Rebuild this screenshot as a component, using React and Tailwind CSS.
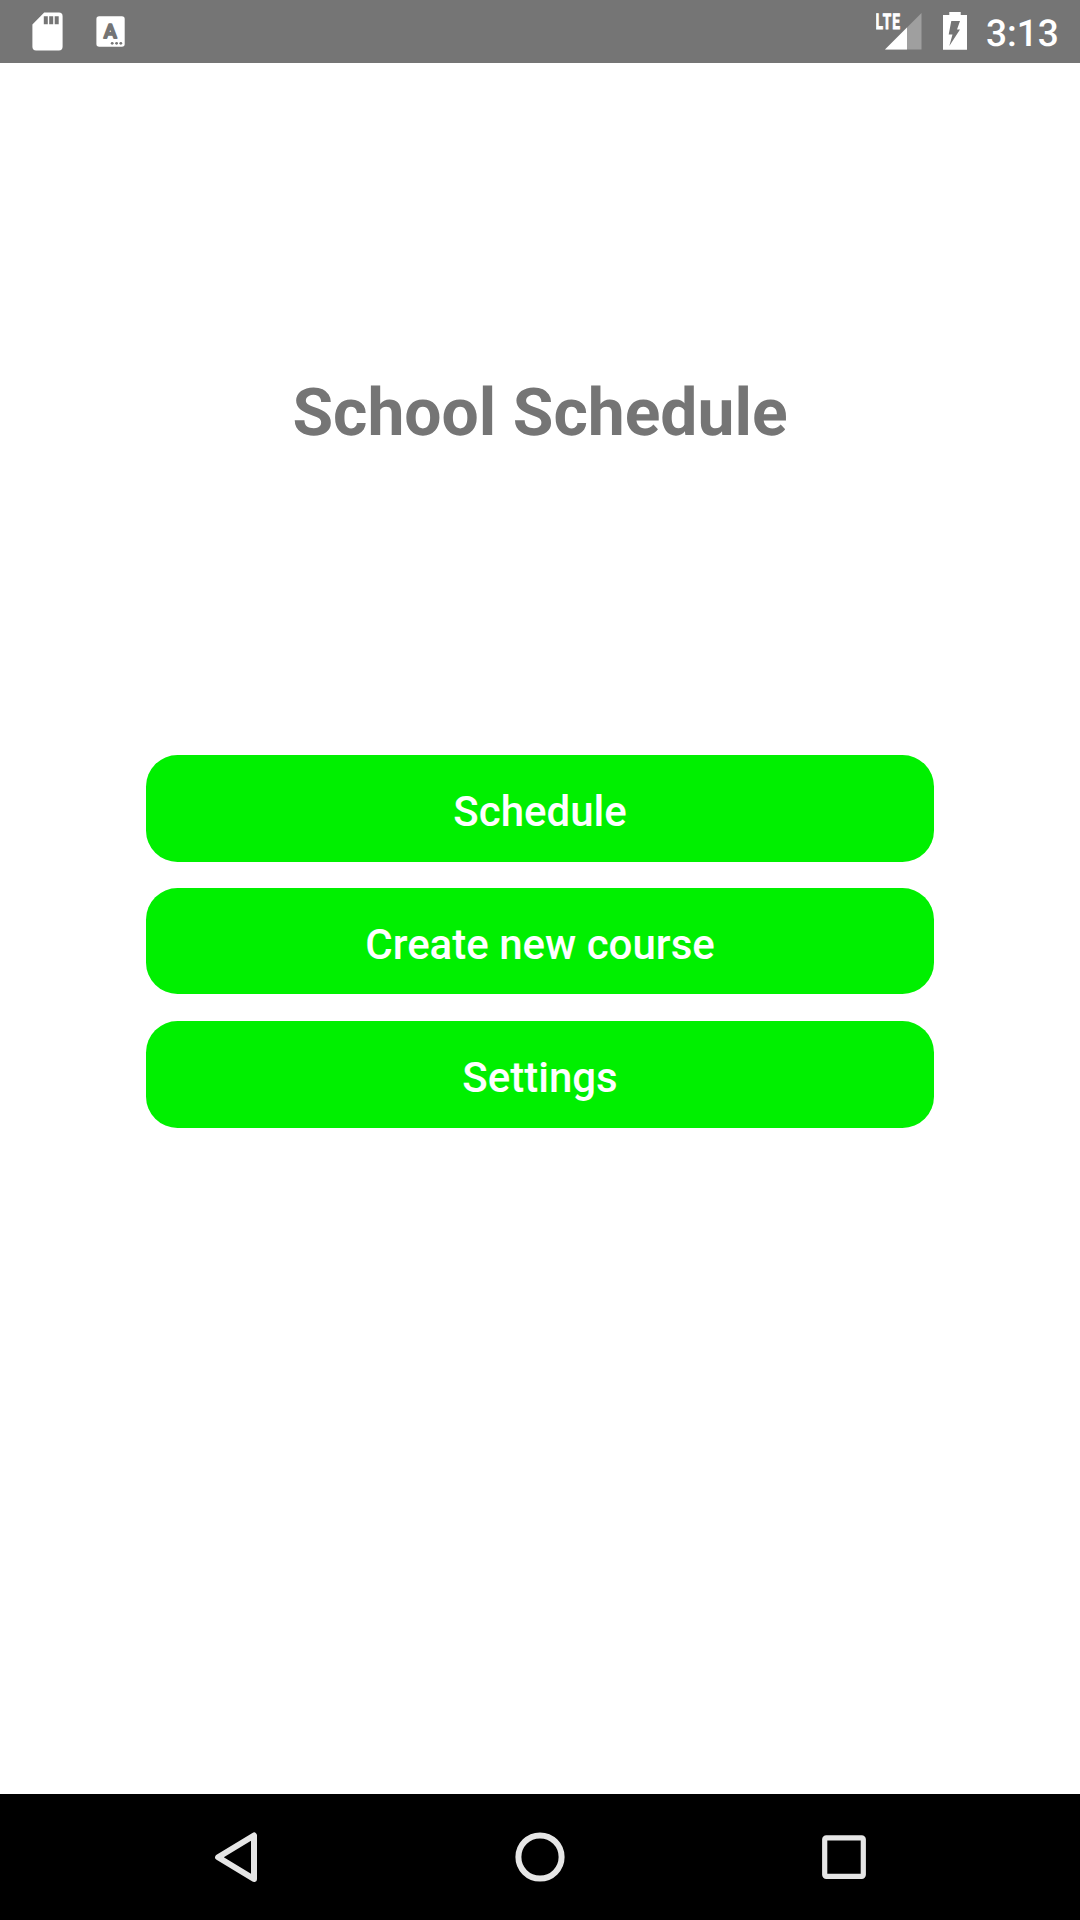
import React from "react";

function SdCardIcon() {
  return (
    <svg width="32" height="40" viewBox="0 0 32 40" className="shrink-0">
      <path
        fill="#fff"
        fillRule="evenodd"
        d="M12.2 1.6H26.9a3.7 3.7 0 0 1 3.7 3.7V35.8a3.7 3.7 0 0 1-3.7 3.7H4.1a3.7 3.7 0 0 1-3.7-3.7V13.4ZM11.8 5.3v8h4v-8ZM17.2 5.3v8h4v-8ZM22.7 5.3v8h4v-8Z"
      />
    </svg>
  );
}

function LetterBoxIcon() {
  return (
    <svg width="29" height="31" viewBox="0 0 29 31" className="shrink-0">
      <rect x="0.4" y="0.2" width="28.3" height="30.6" rx="2.8" fill="#fff" />
      <text
        x="14.3"
        y="22"
        textAnchor="middle"
        fontFamily="Roboto, sans-serif"
        fontWeight="500"
        fontSize="19.6"
        fill="#757575"
        stroke="#757575"
        strokeWidth="1.8"
        strokeLinejoin="round"
      >
        A
      </text>
      <circle cx="16.2" cy="27.3" r="1.4" fill="#757575" />
      <circle cx="20.6" cy="27.3" r="1.4" fill="#757575" />
      <circle cx="24.8" cy="27.3" r="1.4" fill="#757575" />
    </svg>
  );
}

function SignalIcon() {
  return (
    <svg width="46" height="50" viewBox="0 -12 46 50" className="shrink-0">
      <path d="M9 37.5 45.5 1V37.5Z" fill="#9f9f9f" />
      <path d="M9 37.5 31 15.5V37.5Z" fill="#fff" />
      <text
        x="-0.4"
        y="17"
        fontFamily="Roboto, sans-serif"
        fontWeight="700"
        fontSize="21.5"
        letterSpacing="1.8"
        fill="#fff"
        stroke="#fff"
        strokeWidth="0.9"
        textLength="25.5"
        lengthAdjust="spacingAndGlyphs"
      >
        LTE
      </text>
    </svg>
  );
}

function BatteryIcon() {
  return (
    <svg width="24" height="38" viewBox="0 0 24 38" className="shrink-0">
      <path
        fill="#fff"
        fillRule="evenodd"
        d="M6.3 0H17.7V3H24V37.8H0V3H6.3ZM8.3 9 5.7 22.4H9.5L6.3 34 17 17.5H14L17 9Z"
      />
    </svg>
  );
}

function StatusBar() {
  return (
    <header className="flex h-[63px] items-start justify-between bg-[#757575] pr-[21px] pl-8 text-white">
      <div className="flex items-start">
        <div className="mt-[11px]">
          <SdCardIcon />
        </div>
        <div className="mt-4 ml-8">
          <LetterBoxIcon />
        </div>
      </div>
      <div className="flex items-start">
        <SignalIcon />
        <div className="mt-3 ml-[21px]">
          <BatteryIcon />
        </div>
        <span className="mt-[13px] ml-[19px] w-[73px] text-[37px] leading-[44px] font-medium whitespace-nowrap">
          3:13
        </span>
      </div>
    </header>
  );
}

function MenuButton({ children }) {
  return (
    <button className="flex h-[107px] w-full items-center justify-center rounded-[31.5px] bg-[#00f000] pt-[6px] text-[42px] leading-[49px] font-medium text-white even:mb-px even:h-[106px] even:pt-[7px]">
      {children}
    </button>
  );
}

function NavBar() {
  return (
    <nav className="flex h-[126px] items-center justify-between bg-black px-[206px]">
      <svg width="60" height="60" viewBox="0 0 60 60" fill="none" stroke="#e6e6e6" strokeWidth="6">
        <path d="M12.1 30.2 48 8.5V52Z" strokeLinejoin="round" />
      </svg>
      <svg width="60" height="60" viewBox="0 0 60 60" fill="none" stroke="#e6e6e6" strokeWidth="6">
        <circle cx="30" cy="30" r="21.6" />
      </svg>
      <svg width="60" height="60" viewBox="0 0 60 60" fill="none" stroke="#e6e6e6" strokeWidth="5.2">
        <rect x="10.7" y="10.8" width="38.6" height="38.6" rx="1.6" />
      </svg>
    </nav>
  );
}

export default function App() {
  return (
    <div className="flex h-[1920px] w-[1080px] flex-col bg-white font-['Roboto',sans-serif] [text-rendering:geometricPrecision]">
      <StatusBar />
      <main className="flex flex-1 flex-col items-center">
        <h1 className="mt-[311px] text-[66px] leading-[80px] font-bold whitespace-nowrap text-[#757575]">
          School Schedule
        </h1>
        <div className="mt-[301px] flex w-[788px] flex-col gap-[26px]">
          <MenuButton>Schedule</MenuButton>
          <MenuButton>Create new course</MenuButton>
          <MenuButton>Settings</MenuButton>
        </div>
      </main>
      <NavBar />
    </div>
  );
}
